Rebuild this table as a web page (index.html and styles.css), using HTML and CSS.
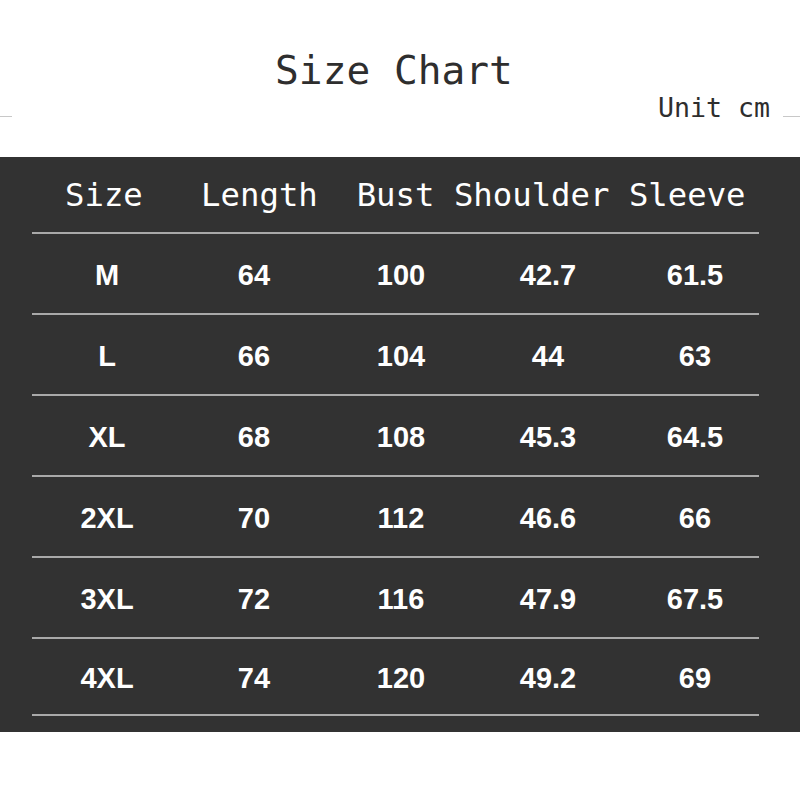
FILE: index.html
```html
<!DOCTYPE html>
<html>
<head>
<meta charset="utf-8">
<link rel="stylesheet" href="styles.css">
</head>
<body>
<div class="top">
  <h1 class="title">Size Chart</h1>
  <div class="unit-row">
    <span class="rule rule-left"></span>
    <span class="unit">Unit cm</span>
    <span class="rule rule-right"></span>
  </div>
</div>
<div class="panel">
  <div class="head-row"><span class="head-text">Size   Length  Bust Shoulder Sleeve</span></div>
  <div class="row"><span>M</span><span>64</span><span>100</span><span>42.7</span><span>61.5</span></div>
  <div class="row"><span>L</span><span>66</span><span>104</span><span>44</span><span>63</span></div>
  <div class="row"><span>XL</span><span>68</span><span>108</span><span>45.3</span><span>64.5</span></div>
  <div class="row"><span>2XL</span><span>70</span><span>112</span><span>46.6</span><span>66</span></div>
  <div class="row"><span>3XL</span><span>72</span><span>116</span><span>47.9</span><span>67.5</span></div>
  <div class="row row-last"><span>4XL</span><span>74</span><span>120</span><span>49.2</span><span>69</span></div>
</div>
</body>
</html>
```
FILE: styles.css
```css
html, body {
  margin: 0;
  padding: 0;
  background: #ffffff;
}

.top {
  height: 157px;
  box-sizing: border-box;
  padding-top: 50px;
}

.title {
  margin: 0;
  font-family: "DejaVu Sans Mono", monospace;
  font-weight: normal;
  font-size: 39.5px;
  line-height: 40px;
  color: #2e2e2e;
  text-align: center;
  padding-right: 12px;
}

.unit-row {
  display: flex;
  align-items: center;
  margin-top: 4px;
  height: 27px;
}

.rule {
  height: 1px;
  background: #c8c8c8;
}

.rule-left {
  width: 12px;
  flex: none;
  margin-top: 18px;
}

.rule-right {
  width: 17px;
  flex: none;
  margin-left: 13px;
  margin-top: 18px;
}

.unit {
  margin-left: auto;
  font-family: "DejaVu Sans Mono", monospace;
  font-size: 26.6px;
  line-height: 27px;
  color: #2e2e2e;
  white-space: pre;
}

.panel {
  background: #323232;
  padding: 0 41px 16px 32px;
}

.head-row {
  height: 75px;
  border-bottom: 2px solid #a9a9a9;
  display: flex;
  align-items: center;
  padding-left: 33px;
}

.head-text {
  font-family: "DejaVu Sans Mono", monospace;
  font-size: 32.3px;
  line-height: 32px;
  color: #ffffff;
  white-space: pre;
}

.row {
  height: 76px;
  padding-top: 3px;
  border-bottom: 2px solid #a9a9a9;
  display: grid;
  grid-template-columns: repeat(5, 147px);
  align-items: center;
  padding-left: 1.5px;
  font-family: "Liberation Sans", Arial, sans-serif;
  font-weight: bold;
  font-size: 29px;
  line-height: 29px;
  color: #ffffff;
}

.row span {
  text-align: center;
}

.row-last {
  height: 72px;
}
```
